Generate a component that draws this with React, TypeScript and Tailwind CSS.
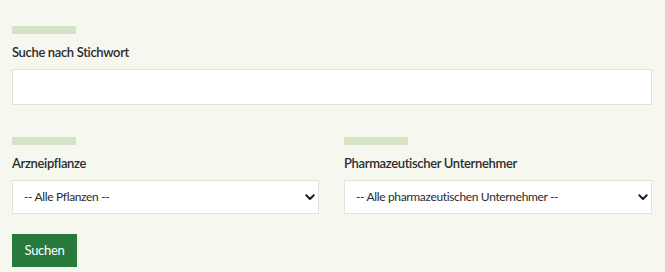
import React from "react";

const Chevron = () => (
  <svg width="10" height="7" viewBox="0 0 10 7" className="shrink-0">
    <path d="M1.3 1.3 L5 5 L8.7 1.3" fill="none" stroke="#1f1f1f" strokeWidth="2" strokeLinecap="round" strokeLinejoin="round" />
  </svg>
);

const Bar = () => <div className="h-[8px] w-[64px] bg-[#d6e4c6]" />;

const SelectBox = ({ text }: { text: string }) => (
  <div className="flex h-[34px] items-center justify-between border border-[#dfe3d8] bg-white pl-[11px] pr-[3px] text-[12px] tracking-[-0.35px] text-[#2b2b2b]">
    <span>{text}</span>
    <Chevron />
  </div>
);

export default function App() {
  return (
    <div
      className="min-h-[272px] w-[665px] bg-[#f6f8f0] px-[12px] pt-[26px]"
      style={{ fontFamily: "Lato, 'Open Sans', sans-serif" }}
    >
      <Bar />
      <div className="mt-[10px] text-[13px] font-semibold leading-[16px] tracking-[-0.35px] text-[#2c2c2c]">Suche nach Stichwort</div>
      <div className="mt-[9px] h-[36px] w-[640px] border border-[#dfe3d8] bg-white" />
      <div className="mt-[32px] grid grid-cols-[307px_308px] gap-x-[25px]">
        <div>
          <Bar />
          <div className="mt-[10px] text-[13px] font-semibold leading-[16px] tracking-[-0.35px] text-[#2c2c2c]">Arzneipflanze</div>
          <div className="mt-[9px]">
            <SelectBox text="-- Alle Pflanzen --" />
          </div>
        </div>
        <div>
          <Bar />
          <div className="mt-[10px] text-[13px] font-semibold leading-[16px] tracking-[-0.35px] text-[#2c2c2c]">Pharmazeutischer Unternehmer</div>
          <div className="mt-[9px]">
            <SelectBox text="-- Alle pharmazeutischen Unternehmer --" />
          </div>
        </div>
      </div>
      <button className="mt-[20px] flex h-[33px] w-[65px] items-center justify-center bg-[#287a3c] text-[13px] tracking-[-0.3px] text-white">
        Suchen
      </button>
    </div>
  );
}
